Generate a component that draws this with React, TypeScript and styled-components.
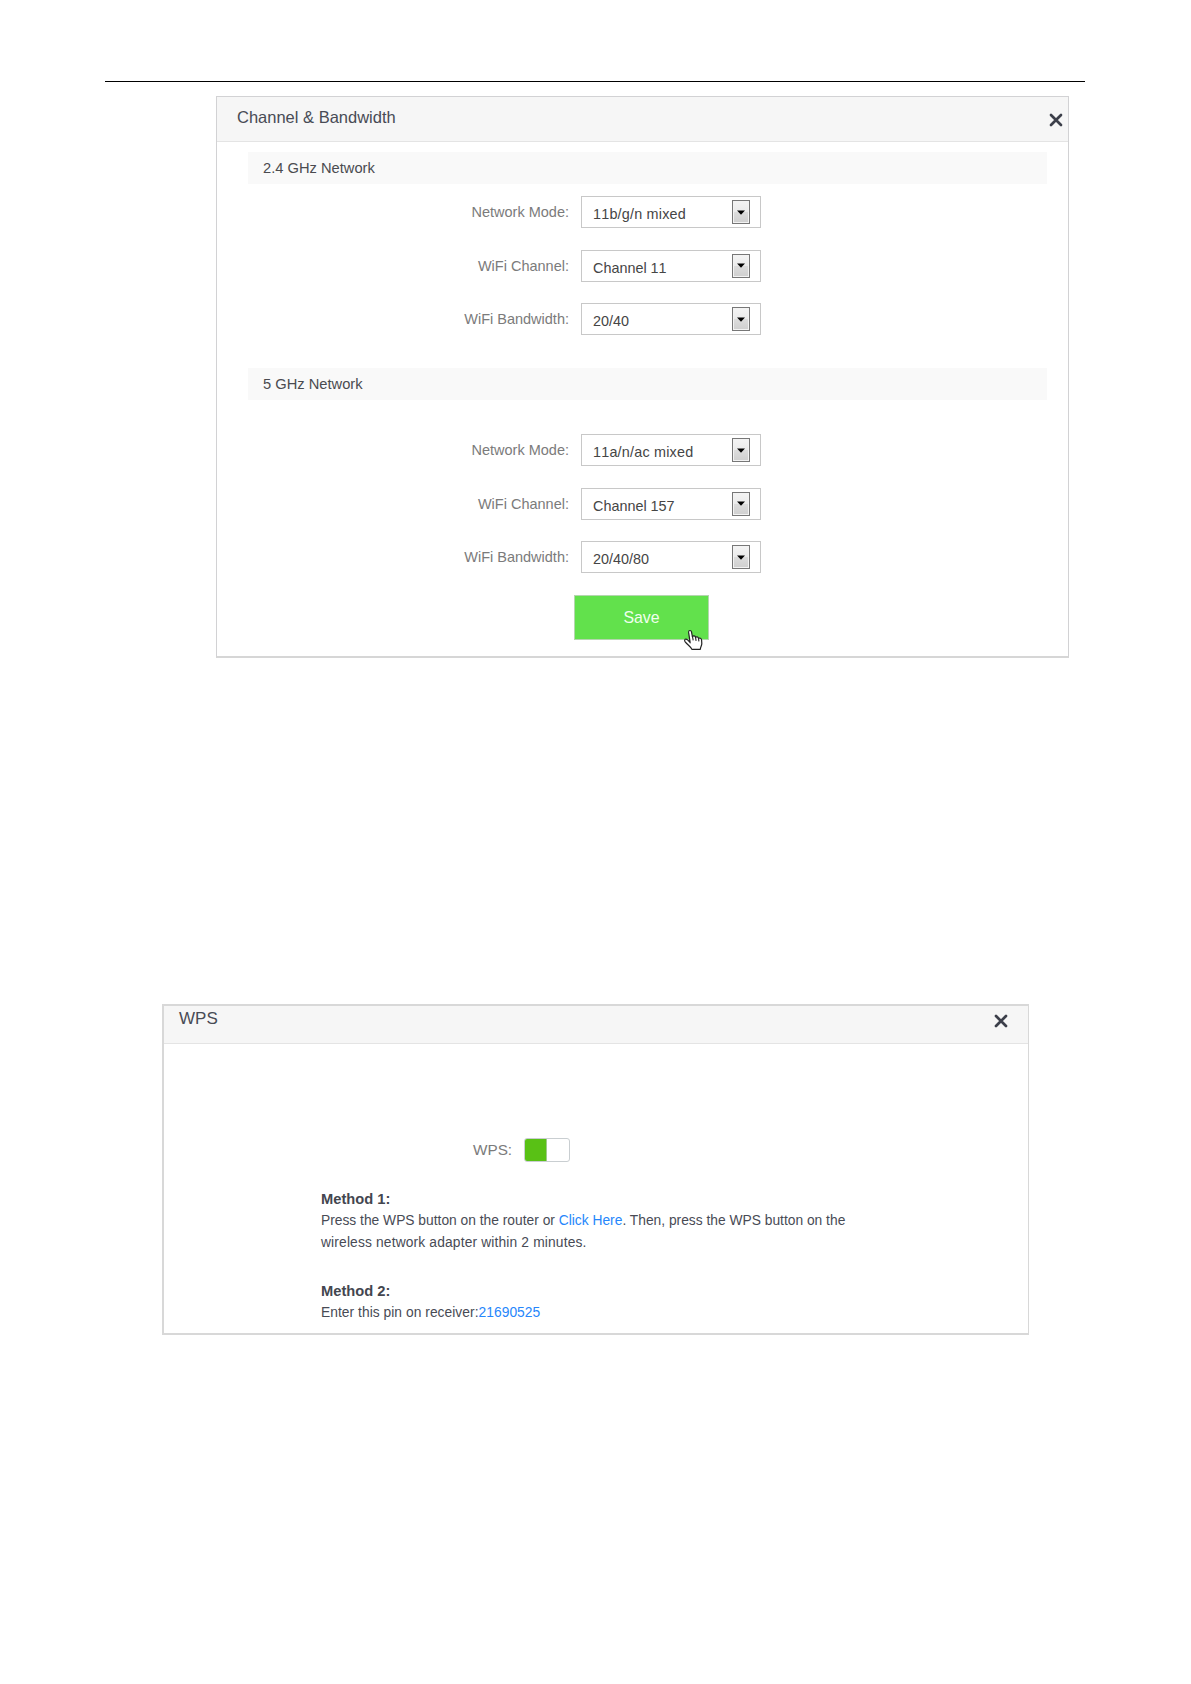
import React from "react";
import styled, { createGlobalStyle } from "styled-components";

const GlobalStyle = createGlobalStyle`
  * { box-sizing: border-box; }
  body {
    margin: 0;
    background: #ffffff;
    font-family: "Liberation Sans", Arial, sans-serif;
  }
`;

const Page = styled.main`
  width: 1191px;
  height: 1684px;
  padding-top: 81px;
  display: flex;
  flex-direction: column;
  background: #ffffff;
`;

const TopRule = styled.hr`
  flex: none;
  width: 980px;
  height: 1px;
  margin: 0 0 14px 105px;
  border: 0;
  background: #000000;
`;

const ChannelPanel = styled.section`
  flex: none;
  width: 853px;
  height: 562px;
  margin-left: 216px;
  border: 1px solid #d2d2d4;
  border-bottom: 2px solid #d6d6d6;
`;

const WpsPanel = styled.section`
  flex: none;
  width: 867px;
  height: 331px;
  margin: 346px 0 0 162px;
  border: 2px solid #d8d8d8;
  border-right-width: 1px;
`;

const PanelHeader = styled.header<{ $height: number; $pad: string }>`
  display: flex;
  align-items: flex-start;
  justify-content: space-between;
  height: ${(p) => p.$height}px;
  padding: ${(p) => p.$pad};
  background: #f6f6f6;
  border-bottom: 1px solid #e4e4e4;
`;

const Title = styled.h2<{ $size: number }>`
  margin: 0;
  font-size: ${(p) => p.$size}px;
  line-height: 20px;
  font-weight: 400;
  color: #484b55;
`;

const CloseButton = styled.button<{ $top: number }>`
  display: block;
  width: 14px;
  height: 14px;
  margin: ${(p) => p.$top}px 0 0;
  padding: 0;
  border: 0;
  background: none;
  svg { display: block; }
`;

const SectionBar = styled.h3<{ $top: number }>`
  width: 799px;
  height: 32px;
  margin: ${(p) => p.$top}px 0 0 31px;
  padding-left: 15px;
  background: #f9f9f9;
  font-size: 14.7px;
  line-height: 32px;
  font-weight: 400;
  color: #4a4b50;
`;

const Fields = styled.div<{ $top: number }>`
  display: flex;
  flex-direction: column;
  gap: 21.5px;
  padding-top: ${(p) => p.$top}px;
  font-kerning: none;
`;

const Field = styled.div`
  display: grid;
  grid-template-columns: 352px 180px;
  column-gap: 12px;
  height: 32px;
`;

const FieldLabel = styled.span`
  text-align: right;
  font-size: 14.5px;
  line-height: 32.5px;
  color: #7b7b7b;
  white-space: nowrap;
`;

const SelectBox = styled.div`
  display: flex;
  justify-content: space-between;
  height: 32px;
  padding: 3px 10px 0 11px;
  border: 1px solid #c8c8c8;
  background: #ffffff;
`;

const SelectValue = styled.span<{ $spacing: number }>`
  font-size: 14.4px;
  line-height: 28px;
  letter-spacing: ${(p) => p.$spacing}px;
  color: #454545;
  white-space: nowrap;
`;

const ArrowButton = styled.span`
  display: flex;
  align-items: center;
  justify-content: center;
  width: 18px;
  height: 24px;
  border: 1px solid #777777;
  background: linear-gradient(#f4f4f4 0%, #ebebeb 48%, #dcdcdc 52%, #cfcfcf 100%);
  box-shadow: inset 0 0 0 1px #f3f3f3;
`;

const SaveButton = styled.button`
  position: relative;
  display: block;
  width: 135px;
  height: 45px;
  margin: 22px 0 0 357px;
  padding: 0;
  border: 1px solid #b4d6ae;
  background: #62e14c;
  font-family: inherit;
  font-size: 15.9px;
  line-height: 43px;
  color: #f0ffee;
`;

const HandCursor = styled.svg`
  position: absolute;
  left: 108px;
  top: 33px;
`;

const ToggleRow = styled.div`
  display: flex;
  align-items: center;
  gap: 12px;
  margin: 94px 0 0 309px;
  height: 24px;
`;

const ToggleLabel = styled.span`
  width: 39px;
  font-size: 15.3px;
  line-height: 24px;
  color: #7b7b7b;
`;

const Toggle = styled.span`
  display: flex;
  width: 46px;
  height: 24px;
  border: 1px solid #c9ced1;
  border-radius: 3px;
  overflow: hidden;
  background: #ffffff;
`;

const ToggleFill = styled.span`
  width: 22px;
  background: #59c115;
  border-right: 1px solid #9fc98a;
`;

const Method = styled.div<{ $top: number }>`
  margin: ${(p) => p.$top}px 0 0 157px;
  width: 560px;
  color: #484b55;
`;

const MethodTitle = styled.h4`
  margin: 0 0 1px;
  font-size: 14.7px;
  line-height: 20px;
  font-weight: 700;
  color: #43464f;
`;

const MethodLine = styled.p<{ $spacing: number }>`
  margin: 0;
  font-size: 13.8px;
  line-height: 21.5px;
  letter-spacing: ${(p) => p.$spacing}px;
  white-space: nowrap;
`;

const Link = styled.a`
  color: #2686fb;
`;

function Close({ top }: { top: number }) {
  return (
    <CloseButton aria-label="Close" $top={top}>
      <svg width="14" height="14" viewBox="0 0 14 14">
        <path d="M2 2L12 12M12 2L2 12" stroke="#3c3f4a" strokeWidth="2.7" strokeLinecap="round" />
      </svg>
    </CloseButton>
  );
}

function SelectField({ label, value, spacing = 0 }: { label: string; value: string; spacing?: number }) {
  return (
    <Field>
      <FieldLabel>{label}</FieldLabel>
      <SelectBox>
        <SelectValue $spacing={spacing}>{value}</SelectValue>
        <ArrowButton>
          <svg width="8" height="5" viewBox="0 0 8 5">
            <path d="M0 0.5H8L4 4.8Z" fill="#000000" />
          </svg>
        </ArrowButton>
      </SelectBox>
    </Field>
  );
}

export default function App() {
  return (
    <>
      <GlobalStyle />
      <Page>
        <TopRule />
        <ChannelPanel>
          <PanelHeader $height={45} $pad="10px 5px 0 20px">
            <Title $size={16.5}>Channel &amp; Bandwidth</Title>
            <Close top={5.5} />
          </PanelHeader>
          <SectionBar $top={10}>2.4 GHz Network</SectionBar>
          <Fields $top={12.3}>
            <SelectField label="Network Mode:" value="11b/g/n mixed" spacing={0.2} />
            <SelectField label="WiFi Channel:" value="Channel 11" />
            <SelectField label="WiFi Bandwidth:" value="20/40" />
          </Fields>
          <SectionBar $top={32.7}>5 GHz Network</SectionBar>
          <Fields $top={34.3}>
            <SelectField label="Network Mode:" value="11a/n/ac mixed" spacing={0.2} />
            <SelectField label="WiFi Channel:" value="Channel 157" />
            <SelectField label="WiFi Bandwidth:" value="20/40/80" />
          </Fields>
          <SaveButton>
            Save
            <HandCursor width="21" height="22" viewBox="0 0 21 22">
              <path
                d="M7.2 13.8L5.6 3.4C5.4 1.1 8 0.8 8.5 2.9L9.4 7.6C10.2 6.5 12.2 6.7 12.5 8.3C13.4 7.5 15.2 7.8 15.5 9.3C16.6 8.7 18.5 9.2 18.6 11L18.8 14.4C18.8 16.6 17.6 17.6 17.3 20.3H8.9C8.2 17.9 4.6 15.9 2 12.6C0.8 10.4 2.8 9.3 4.6 10.9L7 13.2Z"
                fill="#ffffff"
                stroke="#222222"
                strokeWidth="1.2"
                strokeLinejoin="round"
              />
              <path d="M9.4 7.2L10.2 11.3M12.5 8.2L13.1 11.8M15.5 9.2L15.9 12.4" stroke="#222222" strokeWidth="1.1" />
            </HandCursor>
          </SaveButton>
        </ChannelPanel>
        <WpsPanel>
          <PanelHeader $height={38} $pad="3px 20px 0 15px">
            <Title $size={17}>WPS</Title>
            <Close top={5} />
          </PanelHeader>
          <ToggleRow>
            <ToggleLabel>WPS:</ToggleLabel>
            <Toggle>
              <ToggleFill />
            </Toggle>
          </ToggleRow>
          <Method $top={27}>
            <MethodTitle>Method 1:</MethodTitle>
            <MethodLine $spacing={0}>
              Press the WPS button on the router or <Link>Click Here</Link>. Then, press the WPS button on the
            </MethodLine>
            <MethodLine $spacing={0.15}>wireless network adapter within 2 minutes.</MethodLine>
          </Method>
          <Method $top={28}>
            <MethodTitle>Method 2:</MethodTitle>
            <MethodLine $spacing={0.04}>
              Enter this pin on receiver:<Link>21690525</Link>
            </MethodLine>
          </Method>
        </WpsPanel>
      </Page>
    </>
  );
}
